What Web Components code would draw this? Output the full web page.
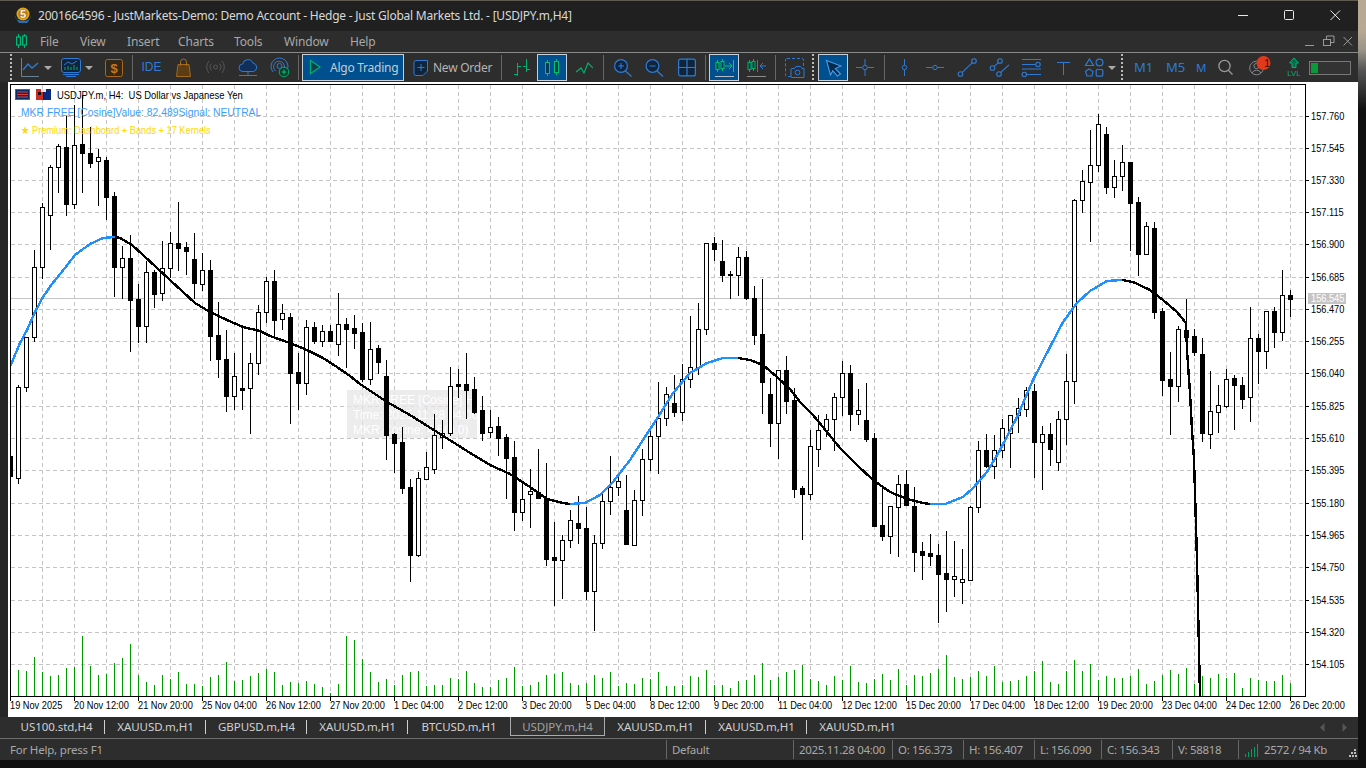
<!DOCTYPE html>
<html>
<head>
<meta charset="utf-8">
<title>MT5</title>
<style>
html, body { margin: 0; height: 100%; overflow: hidden; }
body { font-family: "Noto Sans", "Liberation Sans", sans-serif; display: flex; background: linear-gradient(#b7a893 0 30px, #9a9488 50px, #555 70px, #101010 110px); }
svg { display: block; }
</style>
</head>
<body>
<mt-window>
  <mt-titlebar>2001664596 - JustMarkets-Demo: Demo Account - Hedge - Just Global Markets Ltd. - [USDJPY.m,H4]</mt-titlebar>
  <mt-menubar>
    <span style="width:40px">File</span><span style="width:47px">View</span><span style="width:51px">Insert</span><span style="width:56px">Charts</span><span style="width:50px">Tools</span><span style="width:66px">Window</span><span>Help</span>
  </mt-menubar>
  <mt-toolbar>
    <tool-grip></tool-grip>
    <tool-btn w="18" ml="8"><svg width="18" height="24" fill="none"><path d="M.5 3V21.5H18" stroke="#6d8196"/><path d="M2 15L7 9L11 13L17 8" stroke="#2e7bd6" stroke-width="1.3"/></svg></tool-btn>
    <tool-drop ml="5"></tool-drop>
    <tool-btn w="20" ml="9"><svg width="20" height="24" fill="none"><rect x=".5" y="3.5" width="19" height="14" rx="2.5" stroke="#2e7bd6" fill="#10243c"/><path d="M3 10L7 7L11 9L16 6" stroke="#2e7bd6"/><path d="M4 15V12M7 15V11M10 15V12M13 15V10M16 15V12" stroke="#00b070"/><path d="M2 19.5H18M5 21.5H15" stroke="#2e7bd6"/></svg></tool-btn>
    <tool-drop ml="4"></tool-drop>
    <tool-btn w="18" ml="12"><svg width="18" height="24"><rect x=".5" y="4.5" width="17" height="17" rx="2" stroke="#a8681c" fill="#33291a"/><text x="9" y="17.5" text-anchor="middle" font-family="Liberation Sans" font-weight="700" font-size="13" fill="#c07a1e">$</text></svg></tool-btn>
    <tool-sep ml="9"></tool-sep>
    <tool-btn w="19" ml="9" style="color:#2e7bd6;font-size:12px;font-family:'Liberation Sans'">IDE</tool-btn>
    <tool-btn w="17" ml="14"><svg width="17" height="24" fill="none"><path d="M1.5 21.5L3 9.5H14L15.5 21.5Z" stroke="#a36a1e" fill="#5c3c12"/><path d="M5.5 11V7a3 3 0 0 1 6 0V11" stroke="#a36a1e"/></svg></tool-btn>
    <tool-btn w="19" ml="14"><svg width="19" height="24" fill="none" stroke="#55575a"><circle cx="9.5" cy="12" r="2"/><path d="M5.5 8.5a5 5 0 0 0 0 7M13.5 8.5a5 5 0 0 1 0 7M3 6a9 9 0 0 0 0 12M16 6a9 9 0 0 1 0 12"/></svg></tool-btn>
    <tool-btn w="20" ml="13"><svg width="20" height="24" fill="none" stroke="#2e7bd6"><path d="M5 16.5a3.7 3.7 0 0 1-.5-7.4a5.5 5.5 0 0 1 10.5-1a4.3 4.3 0 0 1 .5 8.4Z" fill="#10305a"/><path d="M10 17V20M1 20.5H19"/></svg></tool-btn>
    <tool-btn w="20" ml="12"><svg width="20" height="24" fill="none" stroke="#2e7bd6"><path d="M16 17a8.5 8.5 0 1 0-13 0"/><path d="M13.5 15a5.5 5.5 0 1 0-8 1"/><circle cx="9.5" cy="11" r="2.5"/><circle cx="14" cy="17" r="4.8" fill="#0b3a2a" stroke="#00b070"/><path d="M14 14.5V19.5M11.5 17H16.5" stroke="#00c878"/></svg></tool-btn>
    <tool-sep ml="8"></tool-sep>
    <tool-btn w="102" ml="3" active style="justify-content:flex-start;color:#c4ccd4;font-size:12px;letter-spacing:-.25px"><svg width="12" height="24" style="margin:0 9px 0 7px;flex:none"><path d="M1.5 5.5L11 12L1.5 18.5Z" fill="#0f3d52" stroke="#00b070" stroke-width="1.2"/></svg>Algo Trading</tool-btn>
    <tool-btn w="15" ml="9"><svg width="15" height="24" fill="none" stroke="#2e7bd6"><path d="M3 5.5H14.5V16L10 20.5H3a2 2 0 0 1-2-2V7.5a2 2 0 0 1 2-2Z" fill="#10243c"/><path d="M8 9V16M4.5 12.5H11.5"/></svg></tool-btn>
    <tool-btn w="58" ml="5" style="color:#b4b4b4;font-size:12px;letter-spacing:-.25px;justify-content:flex-start">New Order</tool-btn>
    <tool-sep ml="10"></tool-sep>
    <tool-btn w="18" ml="10"><svg width="18" height="24" fill="none" stroke="#00b070"><path d="M5.5 8V21M2 19.5H5.5M5.5 11.5H9M14.5 4V17M11 11.5H14.5M14.5 14.5H18"/></svg></tool-btn>
    <tool-btn w="30" ml="7" active><svg width="30" height="24" fill="none" stroke="#00c070"><rect x="8.5" y="7.5" width="4" height="11" fill="#063d52"/><rect x="17.5" y="6.5" width="4" height="11" fill="#063d52"/><path d="M10.5 5V7.5M10.5 18.5V21M19.5 4V6.5M19.5 17.5V20"/></svg></tool-btn>
    <tool-btn w="17" ml="9"><svg width="17" height="24" fill="none" stroke="#00b070" stroke-width="1.2"><path d="M0 17L5 13L8 18L12 8L17 13"/></svg></tool-btn>
    <tool-sep ml="10"></tool-sep>
    <tool-btn w="18" ml="10"><svg width="18" height="24" fill="none" stroke="#2e7bd6" stroke-width="1.2"><circle cx="7" cy="11" r="6.4" fill="#10243c"/><path d="M11.5 16L17.5 21.5M7 8V14M4 11H10"/></svg></tool-btn>
    <tool-btn w="19" ml="13"><svg width="19" height="24" fill="none" stroke="#2e7bd6" stroke-width="1.2"><circle cx="7.5" cy="11" r="6.4" fill="#10243c"/><path d="M12 16L18 21.5M4.5 11H10.5"/></svg></tool-btn>
    <tool-btn w="18" ml="14"><svg width="18" height="24" fill="none" stroke="#2e7bd6" stroke-width="1.2"><rect x=".6" y="4.1" width="16.8" height="16.8" rx="2" fill="#10243c"/><path d="M9 4V21M1 12.5H17"/></svg></tool-btn>
    <tool-sep ml="9"></tool-sep>
    <tool-btn w="30" ml="3" active><svg width="30" height="24" fill="none"><path d="M8.5 5V17M13.5 4V16" stroke="#00c070"/><rect x="7" y="7.5" width="3" height="7" fill="#063d52" stroke="#00c070"/><rect x="12" y="6.5" width="3" height="7" fill="#063d52" stroke="#00c070"/><path d="M16 11H23M20 8L23 11L20 14" stroke="#00c070"/><path d="M24.5 5V17" stroke="#2e9bff"/><path d="M6 21.5H25" stroke="#b8bcc0"/></svg></tool-btn>
    <tool-btn w="20" ml="8"><svg width="20" height="24" fill="none"><path d="M2.5 5V17M6.5 4V16" stroke="#00b070"/><rect x="1" y="7.5" width="3" height="7" fill="#10303a" stroke="#00b070"/><rect x="5" y="6.5" width="3" height="7" fill="#10303a" stroke="#00b070"/><path d="M10.5 5V17" stroke="#2e7bd6"/><path d="M19 11H13M16 8L13 11L16 14" stroke="#2e7bd6"/><path d="M0 21.5H19" stroke="#8c8c8c"/></svg></tool-btn>
    <tool-sep ml="8"></tool-sep>
    <tool-btn w="20" ml="9"><svg width="20" height="24" fill="none" stroke="#2e7bd6"><rect x=".5" y="3.5" width="18" height="18" rx="1.5" stroke-dasharray="3 2"/><path d="M6 22V14.5a1 1 0 0 1 1-1H9.5L11 11.5H15.5L17 13.5H19V22.5H7a1 1 0 0 1-1-.5Z" fill="#2d2d2d"/><circle cx="12.5" cy="17.5" r="2.4"/></svg></tool-btn>
    <tool-grip ml="7"></tool-grip>
    <tool-btn w="30" ml="4" active><svg width="30" height="24"><path d="M8.5 5.5L23 11L17.3 13.6L22.5 19L19.5 21L14.8 15.8L12.5 20Z" fill="#082a4c" stroke="#4a9be6" stroke-width="1.1"/></svg></tool-btn>
    <tool-btn w="18" ml="8"><svg width="18" height="24" fill="none" stroke="#2e7bd6"><path d="M0 12.5H6.5M11.5 12.5H18M9 4V10M9 15V21"/><circle cx="9" cy="12.5" r="2.3"/></svg></tool-btn>
    <tool-sep ml="10"></tool-sep>
    <tool-btn w="12" ml="13"><svg width="12" height="24" fill="none" stroke="#2e7bd6"><path d="M6.5 4V10M6.5 15V21"/><circle cx="6.5" cy="12.5" r="2.2"/></svg></tool-btn>
    <tool-btn w="18" ml="16"><svg width="18" height="24" fill="none" stroke="#2e7bd6"><path d="M0 12.5H6.5M11 12.5H18"/><circle cx="9" cy="12.5" r="2.2"/></svg></tool-btn>
    <tool-btn w="20" ml="13"><svg width="20" height="24" fill="none" stroke="#2e7bd6" stroke-width="1.1"><circle cx="3.5" cy="19" r="2.3"/><circle cx="17" cy="6" r="2.3"/><path d="M5.2 17.3L15.4 7.6"/></svg></tool-btn>
    <tool-btn w="20" ml="12"><svg width="20" height="24" fill="none" stroke="#2e7bd6" stroke-width="1.1"><circle cx="3.5" cy="13" r="2.3"/><circle cx="11" cy="6" r="2.3"/><circle cx="10" cy="19" r="2.3"/><path d="M5.2 11.4L9.4 7.6M11.7 17.4L20 10"/></svg></tool-btn>
    <tool-btn w="20" ml="12"><svg width="20" height="24" fill="none" stroke="#2e7bd6" stroke-width="1.1"><path d="M1 4.5H20M1 9.5H14.5M1 14H20M5.5 19.5H20"/><circle cx="17" cy="9.5" r="2.2"/><circle cx="3.3" cy="19.5" r="2.2"/></svg></tool-btn>
    <tool-btn w="15" ml="15"><svg width="15" height="24" fill="none" stroke="#2e7bd6"><path d="M1 7.5H14M7.5 7.5V20"/></svg></tool-btn>
    <tool-btn w="20" ml="13"><svg width="20" height="24" fill="none" stroke="#2e7bd6" stroke-width="1.2"><path d="M5.5 4L9.5 10.5H1.5Z"/><circle cx="15.5" cy="7.5" r="3.4"/><path d="M5 14L9 16.5L8 21H3L1.5 16.5Z"/><rect x="12.2" y="14.5" width="6.6" height="6.6" rx="1"/></svg></tool-btn>
    <tool-drop ml="4"></tool-drop>
    <tool-grip ml="5"></tool-grip>
    <tool-btn w="17" ml="12" style="color:#2e7bd6;font-size:13px">M1</tool-btn>
    <tool-btn w="19" ml="14" style="color:#2e7bd6;font-size:13px">M5</tool-btn>
    <tool-btn w="10" ml="11" style="color:#2e7bd6;font-size:11.5px;justify-content:flex-start">M</tool-btn>
    <tool-btn w="15" ml="12"><svg width="15" height="24" fill="none" stroke="#9a9a9a" stroke-width="1.3"><circle cx="6.5" cy="11" r="5.6"/><path d="M10.5 15.5L14.5 19.5"/></svg></tool-btn>
    <tool-btn w="22" ml="16" style="overflow:visible"><svg width="22" height="24" style="overflow:visible" fill="none" stroke="#85888c"><circle cx="7.5" cy="13" r="6.8"/><circle cx="7.5" cy="11" r="2.6"/><path d="M3 18a5 5 0 0 1 9 0"/><circle cx="14.5" cy="8" r="7" fill="#e0391c" stroke="none"/></svg><notice-badge>1</notice-badge></tool-btn>
    <tool-btn w="14" ml="16"><svg width="14" height="24"><path d="M7 3L11.5 8H9V12.5H5V8H2.5Z" fill="#0a6a48" stroke="#00b070"/><text x="7" y="21" text-anchor="middle" font-family="Liberation Sans" font-size="8" fill="#00b070">LVL</text></svg></tool-btn>
    <tool-btn w="43" ml="8"><svg width="43" height="24"><rect x=".5" y="6.5" width="41" height="13" fill="#333" stroke="#777"/><rect x="2" y="8" width="7" height="10" fill="#0a9a3c"/></svg></tool-btn>
  </mt-toolbar>
  <mt-chart>
    <chart-legend>
      <legend-line kind="main">USDJPY.m, H4:  US Dollar vs Japanese Yen</legend-line>
      <legend-line kind="value">MKR FREE [Cosine]Value: 82.489Signal: NEUTRAL</legend-line>
      <legend-line kind="promo">★ Premium: Dashboard + Bands + 17 Kernels</legend-line>
    </chart-legend>
  </mt-chart>
  <mt-tabs>
    <mt-tab w="97">US100.std,H4</mt-tab>
    <mt-tab w="101">XAUUSD.m,H1</mt-tab>
    <mt-tab w="101">GBPUSD.m,H4</mt-tab>
    <mt-tab w="101">XAUUSD.m,H1</mt-tab>
    <mt-tab w="102" plain>BTCUSD.m,H1</mt-tab>
    <mt-tab w="95" active>USDJPY.m,H4</mt-tab>
    <mt-tab w="101">XAUUSD.m,H1</mt-tab>
    <mt-tab w="101">XAUUSD.m,H1</mt-tab>
    <mt-tab w="101" plain>XAUUSD.m,H1</mt-tab>
  </mt-tabs>
  <mt-statusbar>
    <status-cell grow style="letter-spacing:-.2px">For Help, press F1</status-cell>
    <status-cell w="127">Default</status-cell>
    <status-cell w="99">2025.11.28 04:00</status-cell>
    <status-cell w="71">O: 156.373</status-cell>
    <status-cell w="71">H: 156.407</status-cell>
    <status-cell w="67">L: 156.090</status-cell>
    <status-cell w="71">C: 156.343</status-cell>
    <status-cell w="66">V: 58818</status-cell>
    <status-cell w="112"><svg width="14" height="14" style="margin:0 6px 0 0;flex:none" fill="none" stroke="#00a060"><path d="M1.5 14V11M4.5 14V9M7.5 14V6M10.5 14V4"/><path d="M13.5 14V1" stroke="#666"/></svg>2572 / 94 Kb</status-cell>
  </mt-statusbar>
</mt-window>

<script>
// candles: type hi top bottom lo, one every 8px starting at x=10
const CANDLES = `B 448 456 476 478|W 385 387 478 483|W 337 337 387 391|W 250 267 337 341|W 203 207 267 278|W 165 167 215 249|W 144 146 167 192|B 116 147 204 215|W 105 145 204 208|B 95 144 153 192|B 127 153 163 167|W 149 157 161 205|B 157 160 197 219|B 192 196 267 296|W 246 258 267 298|B 235 258 300 351|B 284 299 326 342|W 261 272 326 342|B 270 272 294 307|W 241 268 293 300|W 232 243 268 277|B 202 243 248 270|B 242 247 251 274|B 233 259 283 298|W 253 270 284 290|B 260 270 336 360|B 302 335 359 377|B 330 359 396 411|W 353 376 396 409|B 325 388 390 409|W 353 363 388 433|W 305 312 363 374|W 277 281 312 322|B 270 281 320 337|W 304 313 319 329|B 313 317 373 423|B 353 372 383 409|W 320 327 383 394|B 322 327 341 343|W 325 331 341 346|B 325 331 341 341|W 293 324 344 355|B 318 324 329 367|B 315 328 333 348|B 323 332 379 381|W 322 349 379 384|B 345 348 362 373|B 360 376 435 459|B 433 434 443 472|B 427 442 488 493|B 479 487 555 581|W 472 478 555 556|W 452 467 479 479|W 414 435 469 473|W 420 433 437 448|W 367 386 433 435|B 369 384 386 397|B 353 384 390 418|B 377 389 412 413|B 396 410 433 440|W 410 427 432 437|B 417 426 438 455|B 434 437 458 498|B 441 457 512 530|W 482 499 512 520|W 469 491 494 527|B 449 492 498 498|B 463 498 559 565|B 522 557 560 605|W 535 540 560 598|W 510 520 540 547|B 496 523 528 543|B 507 528 591 599|W 535 543 591 630|W 493 501 543 548|W 456 487 501 514|W 477 481 487 495|B 475 510 544 544|W 490 500 545 545|W 449 459 500 515|W 430 436 459 470|W 382 418 436 473|W 387 394 418 425|B 375 403 412 416|W 364 379 412 420|W 316 367 379 387|W 303 329 367 374|W 243 243 329 334|B 237 243 249 260|B 240 261 275 281|B 271 274 275 298|W 247 257 275 295|B 251 257 298 299|B 286 298 335 344|B 279 334 382 413|B 378 394 423 446|W 370 370 423 458|B 356 370 401 413|B 388 400 489 497|B 486 488 494 539|W 430 446 494 499|W 415 430 449 466|W 414 419 430 436|W 393 397 419 450|W 361 373 397 415|B 365 373 414 430|W 389 410 414 424|B 383 420 439 441|B 433 438 526 526|B 487 525 536 540|W 506 506 536 553|W 475 484 507 556|B 470 484 505 505|B 487 506 552 571|B 542 551 555 579|B 534 553 556 565|B 544 555 574 622|B 531 573 579 611|W 541 576 579 596|W 549 579 582 603|W 506 507 580 580|W 441 450 507 512|B 434 450 466 467|W 435 450 466 478|W 419 428 450 457|W 415 415 433 467|W 398 408 415 432|W 387 390 409 416|B 384 391 442 477|W 426 434 442 489|B 423 434 449 465|W 411 419 462 470|W 354 381 419 444|W 199 200 381 403|W 170 181 200 212|W 130 165 182 241|W 114 124 165 171|B 127 134 187 193|W 160 176 187 197|W 145 162 176 190|B 162 162 203 250|B 197 202 254 275|W 222 226 254 254|B 222 228 312 318|B 308 311 380 395|B 352 379 386 434|W 326 329 386 401|B 299 330 337 350|B 329 336 352 355|B 338 354 433 441|W 371 411 434 448|W 385 405 412 432|W 369 379 406 407|B 375 378 385 429|B 377 385 399 408|W 307 338 397 421|B 334 338 351 383|W 311 311 351 368|B 307 311 332 347|W 270 295 332 340|B 290 295 299 316`;

// volume bar tops measured from the screenshot, one every 8px starting at x=18
const VOLUMES = [670,671,657,672,676,675,668,667,636,666,675,674,663,658,644,675,682,685,675,679,672,684,684,686,677,675,662,681,680,676,673,669,672,685,682,683,681,684,687,693,684,636,640,659,672,682,679,685,675,672,671,686,685,685,678,679,671,683,687,687,680,678,667,686,685,682,675,674,672,683,685,683,675,678,672,686,683,684,678,679,672,686,686,685,676,677,670,685,685,688,681,680,675,663,680,677,672,670,665,679,681,685,676,680,666,682,683,679,674,680,669,685,675,676,673,669,655,677,679,677,671,676,666,682,681,680,676,671,661,682,684,671,660,671,664,680,676,678,678,676,669,684,681,675,670,674,668,684,676,678,674,678,673,688,678,680,681,681,675,683];

const BLUE = "#1e90ff";
// pieces of the cosine line, alternating blue (rising) and black (falling)
const LINE = [
  [BLUE, [[10,367],[20,343],[27,330],[35,312],[43,297],[52,284],[61,273],[75,255],[90,244],[103,238],[115,237]]],
  ["#000", [[115,237],[120,238],[132,245],[143,255],[157,268],[170,280],[183,292],[195,303],[210,312],[227,320],[243,327],[260,331],[270,336],[290,343],[307,350],[323,358],[337,367],[350,376],[360,384],[387,402],[410,415],[437,432],[467,451],[490,465],[510,474],[530,487],[547,499],[563,503],[570,504]]],
  [BLUE, [[570,504],[585,503],[600,495],[613,482],[630,460],[643,440],[658,417],[673,393],[690,373],[707,363],[723,358],[738,358]]],
  ["#000", [[738,358],[750,360],[763,365],[777,377],[790,389],[800,402],[813,415],[827,432],[840,448],[857,465],[873,480],[890,492],[907,499],[923,503],[930,504]]],
  [BLUE, [[930,504],[945,504],[963,497],[973,488],[987,472],[1000,450],[1017,417],[1033,380],[1050,347],[1063,322],[1077,303],[1090,291],[1107,281],[1122,280]]],
  ["#000", [[1122,280],[1133,282],[1150,290],[1163,300],[1177,312],[1186,323],[1187,350],[1190,393],[1192,430],[1194,459],[1197,560],[1199,650],[1200,696]]]
];

const PRICES = [["157.760",116],["157.545",148],["157.330",180],["157.115",212],["156.900",244],["156.685",277],["156.470",309],["156.255",341],["156.040",373],["155.825",406],["155.610",438],["155.395",470],["155.180",503],["154.965",535],["154.750",567],["154.535",600],["154.320",632],["154.105",664]];
const TIMES = ["19 Nov 2025","20 Nov 12:00","21 Nov 20:00","25 Nov 04:00","26 Nov 12:00","27 Nov 20:00","1 Dec 04:00","2 Dec 12:00","3 Dec 20:00","5 Dec 04:00","8 Dec 12:00","9 Dec 20:00","11 Dec 04:00","12 Dec 12:00","15 Dec 20:00","17 Dec 04:00","18 Dec 12:00","19 Dec 20:00","23 Dec 04:00","24 Dec 12:00","26 Dec 20:00"];

function define(name, css, html, init) {
  customElements.define(name, class extends HTMLElement {
    constructor() {
      super();
      this.attachShadow({ mode: "open" });
      this.shadowRoot.innerHTML = `<style>${css}</style>${html}`;
    }
    connectedCallback() {
      if (init) init(this);
    }
  });
}

define("mt-window", `:host { display: flex; flex-direction: column; width: 1358px; height: 760px; box-sizing: border-box; border-top: 1px solid #5f5a52; background: #262626; flex: none; }`, `<slot></slot>`);

define("mt-titlebar", `
  :host { display: flex; align-items: center; height: 30px; box-sizing: border-box; padding-bottom: 2px; background: #202020; color: #d8d8d8; font-size: 12px; flex: none; }
  .logo { margin: 0 6px 0 14px; flex: none; }
  .title { flex: 1; white-space: nowrap; letter-spacing: -.23px; }
  .ctl { width: 46px; flex: none; display: flex; justify-content: center; }
  .ctl svg { display: block; }
`, `
  <svg class="logo" width="18" height="18" viewBox="0 0 18 18"><path d="M1 9a8 7 0 0 0 16 0L14 16H4Z" fill="#1f8a4c"/><path d="M3 13a8 5 0 0 0 13 0L13 17H5Z" fill="#2a6fb8"/><circle cx="9" cy="8" r="6.5" fill="#e6a817"/><circle cx="9" cy="8" r="4.8" fill="#b97c10"/><text x="9" y="12" text-anchor="middle" font-family="Liberation Sans" font-weight="700" font-size="11" fill="#f4efe0">5</text></svg>
  <span class="title"><slot></slot></span>
  <div class="ctl"><svg width="11" height="11" fill="none" stroke="#e8e8e8"><path d="M0 5.5H10"/></svg></div>
  <div class="ctl"><svg width="11" height="11" fill="none" stroke="#e8e8e8"><rect x=".5" y=".5" width="9" height="9" rx="1"/></svg></div>
  <div class="ctl"><svg width="11" height="11" fill="none" stroke="#e8e8e8"><path d="M.5.5L10 10M10 .5L.5 10"/></svg></div>
`);

define("mt-menubar", `
  :host { display: flex; align-items: center; height: 22px; box-sizing: border-box; padding-bottom: 1px; background: #2d2d2d; color: #a8a8a8; font-size: 12px; letter-spacing: -.15px; flex: none; border-bottom: 1px solid #8a8a8a; }
  .icon { margin: 0 0 0 16px; flex: none; }
  .items { display: flex; margin-left: 13px; flex: 1; }
  .ctl { display: flex; gap: 8px; margin-right: 5px; }
`, `
  <svg class="icon" width="11" height="14" fill="none" stroke="#00b878" stroke-width="1.2"><rect x=".6" y="3" width="3.8" height="8"/><rect x="6.6" y="2" width="3.8" height="9"/><path d="M2.5 0V3M2.5 11V14M8.5 0V2M8.5 11V14"/></svg>
  <div class="items"><slot></slot></div>
  <div class="ctl">
    <svg width="10" height="12" fill="none" stroke="#9a9a9a"><path d="M0 10.5H9"/></svg>
    <svg width="12" height="12" fill="none" stroke="#9a9a9a"><rect x=".5" y="4.5" width="7" height="6"/><path d="M3.5 4V1H11V7.5H8" /></svg>
    <svg width="10" height="12" fill="none" stroke="#9a9a9a"><path d="M.5 2L9 10.5M9 2L.5 10.5"/></svg>
  </div>
`);

define("mt-toolbar", `:host { display: flex; align-items: center; height: 29px; background: #2d2d2d; padding-left: 8px; flex: none; overflow: hidden; }`, `<slot></slot>`);

define("tool-btn", `
  :host { display: inline-flex; align-items: center; justify-content: center; height: 27px; box-sizing: border-box; padding-bottom: 1px; flex: none; white-space: nowrap; font-family: "Noto Sans", "Liberation Sans", sans-serif; }
  :host([active]) { background: #004f8f; outline: 1px solid #c9cfd6; outline-offset: -1px; }
`, `<slot></slot>`, el => {
  el.style.width = el.getAttribute("w") + "px";
  el.style.marginLeft = (el.getAttribute("ml") || 0) + "px";
});

define("tool-sep", `:host { display: block; width: 1px; height: 25px; background: #666; flex: none; }`, ``, el => {
  el.style.marginLeft = (el.getAttribute("ml") || 0) + "px";
});

define("tool-grip", `:host { display: block; width: 2px; height: 27px; flex: none; background: repeating-linear-gradient(#bbb 0 2px, transparent 2px 4px); }`, ``, el => {
  el.style.marginLeft = (el.getAttribute("ml") || 2) + "px";
  el.style.marginRight = el.getAttribute("ml") ? "0" : "1px";
});

define("tool-drop", `:host { display: block; flex: none; width: 0; height: 0; border: 4px solid transparent; border-top: 4px solid #aaa; border-bottom: 0; }`, ``, el => {
  el.style.marginLeft = (el.getAttribute("ml") || 0) + "px";
});

define("notice-badge", `:host { position: absolute; font: 11px "Liberation Sans", sans-serif; color: #3a1208; margin: -9px 0 0 14px; }`, `<slot></slot>`);

define("mt-chart", `
  :host { display: block; position: relative; height: 635px; margin-left: 8px; background: #fff; flex: none; overflow: hidden; }
  svg { display: block; }
  text { font-family: "Liberation Sans", sans-serif; }
`, `<svg id="plot" width="1350" height="635" viewBox="8 82 1350 635"></svg><slot></slot>`, el => {
  let s = "";
  // grid
  for (let x = 42; x < 1305; x += 32) s += `<path d="M${x}.5 85V696" stroke="#c4c4c4" stroke-dasharray="4 3"/>`;
  for (const p of PRICES) s += `<path d="M11 ${p[1]}.5H1305" stroke="#c4c4c4" stroke-dasharray="4 3"/>`;
  // bid line and the faded indicator panel
  s += `<rect x="347" y="390" width="130" height="48" fill="#e6e6e6" fill-opacity=".75"/>`;
  ["MKR FREE [Cosine] H4", "Time: 2025.11.28 04:00", "MKR Cosine: 4.5(0.0)"].forEach((t, i) => {
    s += `<text x="353" y="${404 + i * 15}" font-size="12" fill="#fff">${t}</text>`;
  });
  s += `<rect x="11" y="298" width="1294" height="1" fill="#c4c4c4"/>`;
  // volumes
  let v = "";
  VOLUMES.forEach((top, i) => { v += `<rect x="${18 + i * 8}" y="${top}" width="1" height="${696 - top}"/>`; });
  s += `<g fill="#009a00" shape-rendering="crispEdges">${v}</g>`;
  // candles
  let c = "";
  CANDLES.split("|").forEach((row, i) => {
    const [kind, hi, top, bot, lo] = row.split(" ");
    const x = 10 + i * 8;
    const H = +hi, T = +top, B = +bot, L = +lo;
    c += `<rect x="${x}" y="${H}" width="1" height="${L - H + 1}"/>`;
    c += `<rect x="${x - 2}" y="${T}" width="5" height="${B - T + 1}"/>`;
    if (kind === "W" && B - T > 1) c += `<rect x="${x - 1}" y="${T + 1}" width="3" height="${B - T - 1}" fill="#fff"/>`;
  });
  s += `<svg x="11" y="85" width="1294" height="611" viewBox="11 85 1294 611"><g fill="#000" shape-rendering="crispEdges">${c}</g>`;
  // indicator line
  for (const [color, pts] of LINE) {
    s += `<polyline points="${pts.map(p => p.join(",")).join(" ")}" fill="none" stroke="${color}" stroke-width="2.4" shape-rendering="crispEdges"/>`;
  }
  s += `</svg>`;
  // frame, ticks and labels
  s += `<rect x="10.5" y="84.5" width="1295" height="612" fill="none" stroke="#000"/>`;
  for (const [label, y] of PRICES) {
    s += `<path d="M1305 ${y}.5H1309" stroke="#000"/>`;
    s += `<text transform="translate(1311 ${y + 3.6}) scale(.88 1)" font-size="10.5" fill="#000">${label}</text>`;
  }
  TIMES.forEach((label, i) => {
    const x = 10 + i * 64;
    s += `<path d="M${x}.5 696V701" stroke="#000"/>`;
    s += `<text transform="translate(${x} 708.6) scale(.88 1)" font-size="10.5" fill="#000">${label}</text>`;
  });
  s += `<rect x="1308" y="293" width="38" height="11" fill="#c4c4c4"/>`;
  s += `<text transform="translate(1311 302) scale(.88 1)" font-size="10.5" fill="#fff">156.545</text>`;
  el.shadowRoot.querySelector("#plot").innerHTML = s;
});

define("chart-legend", `
  :host { position: absolute; left: 7px; top: 7px; display: flex; flex-direction: column; }
  .flags { position: absolute; left: 0; top: 0; display: flex; gap: 6px; }
`, `
  <div class="flags">
    <svg width="15" height="11"><rect width="15" height="11" fill="#c8342c"/><rect x="1" y="1" width="13" height="9" fill="#0c2a66"/><path d="M2 3H13M2 5.5H13M2 8H13" stroke="#e04038" stroke-width="1.2"/></svg>
    <svg width="15" height="11"><rect width="15" height="11" fill="#0a2a80"/><rect width="7" height="11" fill="#d02a26"/><rect x="7" width="1" height="11" fill="#111"/><rect x="5" y="0" width="5" height="3" fill="#e8e8e8"/><rect x="2" y="3" width="3" height="3" fill="#111"/></svg>
  </div>
  <slot></slot>
`);

define("legend-line", `
  :host { display: block; white-space: pre; font-family: "Liberation Sans", sans-serif; transform-origin: left center; }
  :host([kind=main]) { margin-left: 42px; height: 15px; line-height: 13px; font-size: 11px; color: #000; transform: scaleX(.857); }
  :host([kind=value]) { margin-left: 6px; height: 20px; line-height: 16px; font-size: 11.5px; color: #3b9dff; transform: scaleX(.9); }
  :host([kind=promo]) { margin-left: 6px; line-height: 13px; font-size: 11px; color: #ffd700; transform: scaleX(.84); }
`, `<slot></slot>`);

define("mt-tabs", `
  :host { display: flex; height: 21px; background: #2d2d2d; padding-left: 8px; flex: none; border-bottom: 1px solid #6e6e6e; box-sizing: content-box; }
  .scroll { margin: 6px 11px 0 auto; display: flex; gap: 17px; height: 9px; }
`, `<slot></slot><div class="scroll">
  <svg width="5" height="9" fill="#555"><path d="M4.5 0V9L0 4.5Z"/></svg>
  <svg width="5" height="9" fill="#555"><path d="M.5 0V9L5 4.5Z"/></svg>
</div>`);

define("mt-tab", `
  :host { display: flex; align-items: center; justify-content: center; height: 19px; margin-bottom: 2px; box-sizing: border-box; font-size: 11.5px; letter-spacing: -.05px; color: #d0d0d0; flex: none; position: relative; white-space: nowrap; }
  :host(:not([plain]):not([active]))::after { content: ""; position: absolute; right: 0; top: 3px; height: 14px; width: 1px; background: #d0d0d0; }
  :host([active]) { background: #333; color: #a0a0a0; border: 1px solid #aaa; border-top: 0; }
`, `<slot></slot>`, el => { el.style.width = el.getAttribute("w") + "px"; });

define("mt-statusbar", `:host { display: flex; height: 21px; background: #2d2d2d; flex: none; position: relative; }
  .grip { position: absolute; right: 1px; bottom: 3px; }
`, `<slot></slot><svg class="grip" width="8" height="8" fill="#bbb"><rect x="5" y="0" width="2" height="2"/><rect x="2" y="3" width="2" height="2"/><rect x="5" y="3" width="2" height="2"/><rect x="0" y="6" width="2" height="2"/><rect x="3" y="6" width="2" height="2"/><rect x="6" y="6" width="2" height="2"/></svg>`);

define("status-cell", `
  :host { display: flex; align-items: center; height: 19px; margin-top: 1px; box-sizing: border-box; padding-left: 5px; font-size: 11.5px; letter-spacing: -.33px; color: #a8a8a8; white-space: nowrap; flex: none; border-left: 1px solid #666; }
  :host([grow]) { border-left: 0; padding-left: 2px; margin-left: 8px; }
`, `<slot></slot>`, el => {
  if (el.hasAttribute("grow")) el.style.width = "658px";
  else el.style.width = el.getAttribute("w") + "px";
});
</script>
</body>
</html>
